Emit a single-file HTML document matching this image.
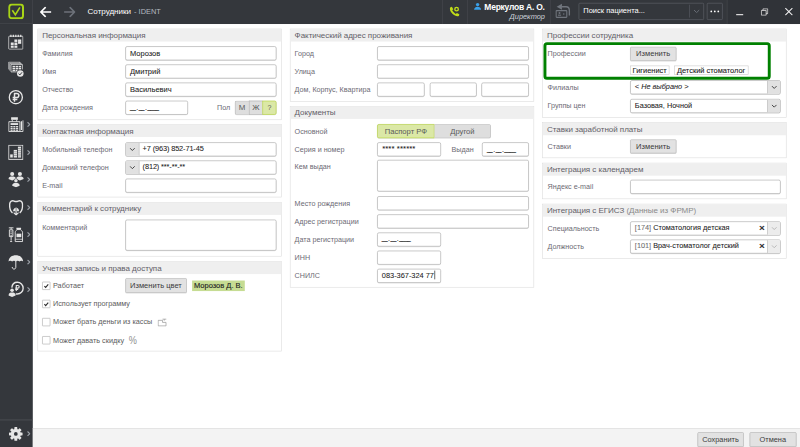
<!DOCTYPE html>
<html lang="ru">
<head>
<meta charset="utf-8">
<title>Сотрудники - IDENT</title>
<style>
html,body{margin:0;padding:0;background:#fff;}
body{width:800px;height:447px;overflow:hidden;position:relative;font-family:"Liberation Sans",sans-serif;}
#app{position:absolute;left:0;top:0;width:1366px;height:766px;transform:scale(0.58565);transform-origin:0 0;background:#fff;overflow:hidden;}
#app *{box-sizing:border-box;}
.abs{position:absolute;}
#topbar{position:absolute;left:0;top:0;width:1366px;height:41px;background:#34373c;}
#sidebar{position:absolute;left:0;top:0;width:56px;height:766px;background:#34373c;}
#bottombar{position:absolute;left:56px;top:731px;width:1310px;height:35px;background:#f3f3f3;border-top:1px solid #dadada;}
.panel{position:absolute;border:1px solid #dcdcdc;background:#fff;}
.ph{position:absolute;left:0;top:0;right:0;height:21px;background:#efefef;color:#626068;font-size:13.7px;letter-spacing:-0.06px;line-height:21px;padding-left:7px;white-space:nowrap;}
.lb{position:absolute;font-size:12.25px;color:#6c6a74;white-space:nowrap;line-height:25.5px;height:24px;}
.in{position:absolute;border:1px solid #a4a4a4;border-radius:3px;background:#fff;box-shadow:0 1px 0 rgba(0,0,0,.10);font-size:12.8px;color:#222;-webkit-text-stroke:.1px #222;line-height:21px;padding-left:7.5px;white-space:nowrap;overflow:hidden;}
.btn{position:absolute;border:1px solid #b4b4b4;border-radius:2px;background:#e2e2e2;box-shadow:0 1px 0 rgba(0,0,0,.12);font-size:12.9px;color:#3c3c3c;text-align:center;white-space:nowrap;}
.cb{position:absolute;width:14px;height:14px;border:1px solid #a8a8a8;background:#fff;border-radius:1px;}
.cbl{position:absolute;font-size:12.4px;color:#5c5c5c;white-space:nowrap;line-height:16px;}
.tg{position:absolute;border-radius:3px;background:#dedede;box-shadow:0 1px 0 rgba(0,0,0,.10);}
.tgi{position:absolute;top:0;height:24px;line-height:22px;text-align:center;font-size:13.5px;color:#5a5a5a;border:1px solid #b4b4b4;background:#dedede;}
.tgi.sel{background:#dbe8a6;border:1px solid #b3d235;color:#5a5a5a;}
.tgi.first{border-radius:3px 0 0 3px;}
.tgi.last{border-radius:0 3px 3px 0;}
.dd{position:absolute;left:0;top:0;bottom:0;width:23px;background:#e1e1e1;border-right:1px solid #b9b9b9;}
.dd.r{left:auto;right:0;border-right:none;border-left:1px solid #b9b9b9;width:22px;}
.chev{position:absolute;left:6px;top:8px;}
.dm{font-size:8.8px;letter-spacing:0;color:#111;-webkit-text-stroke:.55px #111;position:relative;top:0px;}
.dm b{font-weight:normal;margin:0 1.3px;-webkit-text-stroke:.3px #111;}
.chip{position:absolute;background:#c6dc93;color:#222;font-size:12.8px;-webkit-text-stroke:.2px #222;line-height:17px;text-align:center;white-space:nowrap;}
.tag{position:absolute;height:16px;border:1px solid #c9c9c9;background:#fff;font-size:12.7px;line-height:14px;color:#222;-webkit-text-stroke:.15px #222;text-align:center;white-space:nowrap;}
.clr{position:absolute;right:25.5px;top:-0.5px;font-size:17px;color:#222;-webkit-text-stroke:.5px #222;}
.code{color:#777;}
.caret{display:inline-block;width:1px;height:15px;background:#000;vertical-align:-3px;margin-left:1px;}
</style>
</head>
<body>
<div id="app">
<div id="sidebar"><!-- 1 calendar -->
<svg class="abs" style="left:14px;top:57.5px" width="26" height="27" viewBox="0 0 26 27"><rect x="0.8" y="3.8" width="24.4" height="22.2" rx="1.2" fill="none" stroke="#e6e6e6" stroke-width="1.4"/><path d="M4.6 1.2 V5.2 M8.8 1.2 V5.2 M13 1.2 V5.2 M17.2 1.2 V5.2 M21.4 1.2 V5.2" stroke="#e6e6e6" stroke-width="2" fill="none"/><g fill="#e6e6e6"><rect x="10.6" y="9.4" width="5" height="4.2"/><rect x="16.8" y="9.4" width="5.4" height="4.2"/><rect x="4.4" y="14.6" width="5" height="4.2"/><rect x="10.6" y="14.6" width="5" height="4.2"/><rect x="16.8" y="13.6" width="5.4" height="3.2"/><rect x="4.4" y="19.8" width="5" height="3.8"/><rect x="10.6" y="19.8" width="5" height="3.8"/></g></svg>
<!-- 2 schedule check -->
<svg class="abs" style="left:14px;top:105px" width="27" height="27" viewBox="0 0 27 27"><path d="M0.8 13.5 V1 H20 V3 M2.8 15.5 V3 H22 V5 M4.8 17.8 V5 H24.2 V13.5 M4.8 17.8 H14.5" fill="none" stroke="#e6e6e6" stroke-width="1.3"/><g fill="#e6e6e6"><rect x="7.4" y="7.4" width="4.2" height="2.6"/><rect x="12.6" y="7.4" width="4.2" height="2.6"/><rect x="17.8" y="7.4" width="4.2" height="2.6"/><rect x="7.4" y="10.9" width="4.2" height="2.6"/><rect x="12.6" y="10.9" width="4.2" height="2.6"/><rect x="17.8" y="10.9" width="4.2" height="2.6"/><rect x="7.4" y="14.4" width="4.2" height="2.2"/><rect x="12.6" y="14.4" width="3" height="2.2"/></g><circle cx="20.6" cy="20.6" r="5.6" fill="#e6e6e6"/><path d="M17.7 20.7 L19.9 23 L23.6 18.5" fill="none" stroke="#34373c" stroke-width="1.7"/></svg>
<!-- 3 ruble -->
<svg class="abs" style="left:14px;top:152.5px" width="26" height="26" viewBox="0 0 26 26"><circle cx="13" cy="13" r="11.2" fill="none" stroke="#e6e6e6" stroke-width="2.3"/><path d="M10.8 20.6 V6.6 H14.6 C19.4 6.6 19.4 13.6 14.6 13.6 H7.6 M7.6 16.9 H15.6" fill="none" stroke="#e6e6e6" stroke-width="2.5"/></svg>
<!-- 4 cash register -->
<svg class="abs" style="left:14px;top:199px" width="27" height="27" viewBox="0 0 27 27"><path d="M1 25.6 V8.8 H20 V25.6 Z" fill="none" stroke="#e6e6e6" stroke-width="1.6"/><path d="M25.2 6.5 V25.6 H20" fill="none" stroke="#e6e6e6" stroke-width="1.5"/><rect x="21.6" y="8" width="2" height="15" fill="#e6e6e6"/><rect x="5" y="1.2" width="11.5" height="4.4" fill="#e6e6e6"/><path d="M7 5.5 V8.8 M14.5 5.5 V8.8" stroke="#e6e6e6" stroke-width="1.5"/><rect x="4" y="11.2" width="13" height="3.2" fill="#e6e6e6"/><g fill="#e6e6e6"><rect x="4" y="16.2" width="3.6" height="2.4"/><rect x="8.7" y="16.2" width="3.6" height="2.4"/><rect x="13.4" y="16.2" width="3.6" height="2.4"/><rect x="4" y="19.6" width="3.6" height="2.4"/><rect x="8.7" y="19.6" width="3.6" height="2.4"/><rect x="13.4" y="19.6" width="3.6" height="2.4"/><rect x="4" y="22.8" width="3.6" height="1.6"/><rect x="8.7" y="22.8" width="3.6" height="1.6"/><rect x="13.4" y="22.8" width="3.6" height="1.6"/></g></svg>
<!-- 5 chart -->
<svg class="abs" style="left:14px;top:247px" width="26" height="26" viewBox="0 0 26 26"><rect x="0.9" y="0.9" width="24.2" height="24.2" fill="none" stroke="#e6e6e6" stroke-width="1.6"/><g fill="#e6e6e6"><rect x="3.4" y="16.6" width="4.4" height="5.4"/><rect x="9.4" y="9" width="5.6" height="13"/><rect x="16.6" y="3.4" width="5.4" height="18.6"/></g><path d="M9.4 12.2 H15 M9.4 15.4 H15 M9.4 18.6 H15 M16.6 6.6 H22 M16.6 9.8 H22 M16.6 13 H22 M16.6 16.2 H22 M16.6 19.2 H22" stroke="#34373c" stroke-width="0.7"/></svg>
<!-- 6 people -->
<svg class="abs" style="left:14px;top:293px" width="27" height="27" viewBox="0 0 27 27"><g fill="#e6e6e6"><circle cx="6.8" cy="4.2" r="3.5"/><path d="M0.4 12.6 C0.4 8.6 3.4 8.2 6.8 8.2 C10.2 8.2 13.2 8.6 13.2 12.6 L6.8 15.2 Z"/><circle cx="20" cy="4.2" r="3.5"/><path d="M13.6 12.6 C13.6 8.6 16.6 8.2 20 8.2 C23.4 8.2 26.4 8.6 26.4 12.6 L20 15.2 Z"/><circle cx="13.2" cy="15.6" r="3.5" stroke="#34373c" stroke-width="1"/><path d="M6.8 24 C6.8 20 9.8 19.6 13.2 19.6 C16.6 19.6 19.6 20 19.6 24 L13.2 26.6 Z"/></g></svg>
<!-- 7 tooth -->
<svg class="abs" style="left:15px;top:341px" width="25" height="27" viewBox="0 0 25 27"><path d="M6.4 22.4 C3 20 1.2 13 1.5 7.6 C1.8 2.6 6 0.9 9 2.3 C11.5 3.5 13.5 3.5 16 2.3 C19 0.9 23.2 2.6 23.5 7.6 C23.8 13 22 20 18.6 22.4" fill="none" stroke="#e6e6e6" stroke-width="2.4"/><path d="M7.4 19.8 C7.4 15.6 9.6 13.6 12.5 13.6 C15.4 13.6 17.6 15.6 17.6 19.8 Z" fill="#e6e6e6"/><path d="M12.5 13.6 V25.5 M8.4 22 L12.5 26 L16.6 22" fill="none" stroke="#e6e6e6" stroke-width="2"/><path d="M12.5 14 V20" stroke="#34373c" stroke-width="1"/></svg>
<!-- 8 meds -->
<svg class="abs" style="left:14px;top:387px" width="26" height="27" viewBox="0 0 26 27"><path d="M1 2 H9 M5 2 V5 M2 5.5 H8 V17 H2 Z M5 17 V24 M3.2 25.5 H6.8" fill="none" stroke="#e6e6e6" stroke-width="1.6"/><path d="M3.5 9 H6.5 M3.5 12 H6.5 M3.5 15 H6.5" stroke="#e6e6e6" stroke-width="1.2"/><path d="M14 2 H22 V5 H14 Z" fill="#e6e6e6"/><path d="M12 25.5 V9.5 C12 7.5 14 7 15 5 H21 C22 7 24.5 7.5 24.5 9.5 V25.5 Z" fill="none" stroke="#e6e6e6" stroke-width="1.6"/><rect x="14.2" y="12" width="8.2" height="6" fill="#e6e6e6"/><path d="M12 21.5 H24.5" stroke="#e6e6e6" stroke-width="1.3"/></svg>
<!-- 9 umbrella -->
<svg class="abs" style="left:14px;top:435px" width="26" height="26" viewBox="0 0 26 26"><path d="M0.5 11.5 C1 4.5 6.5 1 13 1 C19.5 1 25 4.5 25.5 11.5 C24 9.8 21 9.8 19.3 11.5 C17.5 9.8 14.8 9.8 13 11.5 C11.2 9.8 8.5 9.8 6.7 11.5 C5 9.8 2 9.8 0.5 11.5 Z" fill="#e6e6e6"/><path d="M13 10 V21.5 C13 25.5 6.8 25.5 6.8 21" fill="none" stroke="#e6e6e6" stroke-width="1.7"/></svg>
<!-- 10 ruble + person -->
<svg class="abs" style="left:14px;top:480px" width="27" height="28" viewBox="0 0 27 28"><path d="M6.2 11 C6.8 5.5 10.5 2 15.5 2 C21.2 2 25.5 6.3 25.5 12 C25.5 17.7 21.2 22 15.5 22 C14.5 22 13.6 21.9 12.8 21.6" fill="none" stroke="#e6e6e6" stroke-width="2.3"/><path d="M13.8 17 V7.5 H16.5 C19.6 7.5 19.6 12 16.5 12 H12 M12 14.4 H17" fill="none" stroke="#e6e6e6" stroke-width="1.9"/><g fill="#e6e6e6"><circle cx="6.6" cy="15.8" r="3"/><path d="M0.5 24.5 C0.5 20 3.5 19.3 6.6 19.3 C9.7 19.3 12.7 20 12.7 24.5 L6.6 27 Z"/></g></svg>
<!-- separator + gear -->
<div class="abs" style="left:0;top:715.5px;width:55px;height:2px;background:#474a4f"></div>
<svg class="abs" style="left:14.5px;top:728.5px" width="24" height="24" viewBox="-12.5 -12.5 25 25"><g fill="#e6e6e6"><circle r="9"/><rect x="-2.6" y="-12.2" width="5.2" height="24.4" rx="1"/><rect x="-2.6" y="-12.2" width="5.2" height="24.4" rx="1" transform="rotate(45)"/><rect x="-2.6" y="-12.2" width="5.2" height="24.4" rx="1" transform="rotate(90)"/><rect x="-2.6" y="-12.2" width="5.2" height="24.4" rx="1" transform="rotate(135)"/></g><circle r="3.3" fill="#34373c"/></svg>
<svg class="abs" style="left:46px;top:208.0px" width="6" height="9" viewBox="0 0 6 9"><path d="M1 0.8 L4.8 4.5 L1 8.2" fill="none" stroke="#9a9fa6" stroke-width="2"/></svg>
<svg class="abs" style="left:46px;top:255.5px" width="6" height="9" viewBox="0 0 6 9"><path d="M1 0.8 L4.8 4.5 L1 8.2" fill="none" stroke="#9a9fa6" stroke-width="2"/></svg>
<svg class="abs" style="left:46px;top:302.0px" width="6" height="9" viewBox="0 0 6 9"><path d="M1 0.8 L4.8 4.5 L1 8.2" fill="none" stroke="#9a9fa6" stroke-width="2"/></svg>
<svg class="abs" style="left:46px;top:349.5px" width="6" height="9" viewBox="0 0 6 9"><path d="M1 0.8 L4.8 4.5 L1 8.2" fill="none" stroke="#9a9fa6" stroke-width="2"/></svg>
<svg class="abs" style="left:46px;top:395.5px" width="6" height="9" viewBox="0 0 6 9"><path d="M1 0.8 L4.8 4.5 L1 8.2" fill="none" stroke="#9a9fa6" stroke-width="2"/></svg>
<svg class="abs" style="left:46px;top:443.0px" width="6" height="9" viewBox="0 0 6 9"><path d="M1 0.8 L4.8 4.5 L1 8.2" fill="none" stroke="#9a9fa6" stroke-width="2"/></svg>
<svg class="abs" style="left:46px;top:489.5px" width="6" height="9" viewBox="0 0 6 9"><path d="M1 0.8 L4.8 4.5 L1 8.2" fill="none" stroke="#9a9fa6" stroke-width="2"/></svg>
<svg class="abs" style="left:46px;top:736.0px" width="6" height="9" viewBox="0 0 6 9"><path d="M1 0.8 L4.8 4.5 L1 8.2" fill="none" stroke="#9a9fa6" stroke-width="2"/></svg>
</div>
<div id="topbar"><div class="abs" style="left:0;top:40px;width:56px;height:1px;background:#484b50"></div>
<div class="abs" style="left:55px;top:0;width:1px;height:41px;background:#484b50"></div>
<svg class="abs" style="left:14px;top:6px" width="27" height="27" viewBox="0 0 27 27"><rect x="1.7" y="1.7" width="23.6" height="23.6" rx="4.5" fill="none" stroke="#a8d416" stroke-width="3.4"/><path d="M7 11.5 L12.2 19 L20 6.5" fill="none" stroke="#a8d416" stroke-width="2.8"/></svg>
<svg class="abs" style="left:68px;top:10.5px" width="20" height="19" viewBox="0 0 20 19"><path d="M10 1.2 L1.8 9.5 L10 17.8 M2.4 9.5 H19.5" fill="none" stroke="#fff" stroke-width="2.7"/></svg>
<svg class="abs" style="left:109px;top:10.5px" width="20" height="19" viewBox="0 0 20 19"><path d="M10 1.2 L18.2 9.5 L10 17.8 M17.6 9.5 H0.5" fill="none" stroke="#6d727a" stroke-width="2.7"/></svg>
<div class="abs" style="left:149.5px;top:10px;font-size:13.7px;line-height:20px;color:#fff;white-space:nowrap">Сотрудники</div>
<div class="abs" style="left:229px;top:10px;font-size:12.6px;line-height:20px;color:#b4b9c0;white-space:nowrap">- IDENT</div>
<div class="abs" style="left:755px;top:0;width:1px;height:41px;background:#484b50"></div>
<svg class="abs" style="left:766px;top:10px" width="20" height="20" viewBox="0 0 20 20"><path d="M3 2.3 C1 4.5 2.6 9.6 6.5 13.5 C10.3 17.3 15.4 18.9 17.7 16.9 L18.3 14.3 L14.2 12 L12.3 13.8 C10.2 12.8 7.2 9.8 6.2 7.7 L8 5.8 L5.6 1.7 Z" fill="#c0dc18"/><circle cx="13.6" cy="5.6" r="3" fill="none" stroke="#c0dc18" stroke-width="2.4"/></svg>
<div class="abs" style="left:798px;top:0;width:1px;height:41px;background:#484b50"></div>
<svg class="abs" style="left:809px;top:3.5px" width="13" height="13.5" viewBox="0 0 13 13"><circle cx="6.5" cy="3.6" r="2.9" fill="#3aa0e8"/><path d="M0.5 12.5 C0.5 8.5 3.5 7.2 6.5 7.2 C9.5 7.2 12.5 8.5 12.5 12.5 Z" fill="#3aa0e8"/></svg>
<div class="abs" style="left:827px;top:3px;font-size:14.5px;letter-spacing:-0.42px;font-weight:bold;line-height:19px;color:#fff;white-space:nowrap">Меркулов А. О.</div>
<div class="abs" style="right:435.5px;top:20px;font-size:12.6px;font-style:italic;line-height:17px;color:#cdd2db;white-space:nowrap">Директор</div>
<div class="abs" style="left:939px;top:0;width:1px;height:41px;background:#484b50"></div>
<svg class="abs" style="left:948px;top:5px" width="27" height="27" viewBox="0 0 27 27"><path d="M2.5 6.6 L11.5 1.4 V11.8 Z" fill="#70757d"/><path d="M11 6.6 H18.5 C22.3 6.6 24.2 9.2 24.2 12.8 V21.6" fill="none" stroke="#70757d" stroke-width="2.3"/><rect x="1.6" y="13.2" width="18.2" height="11.4" rx="1" fill="none" stroke="#70757d" stroke-width="1.9"/><circle cx="7.4" cy="17.2" r="1.7" fill="#70757d"/><rect x="4.8" y="20" width="5.2" height="1.8" fill="#70757d"/><circle cx="14.6" cy="18.8" r="1.3" fill="#70757d"/></svg>
<div class="abs" style="left:988px;top:4.5px;width:213.5px;height:29px;border:1.5px solid #62666d;border-radius:2px"></div>
<div class="abs" style="left:996px;top:9px;font-size:12.8px;line-height:20px;color:#fff;white-space:nowrap">Поиск пациента...</div>
<div class="abs" style="left:1177px;top:8px;width:1px;height:22px;background:#5b5f66"></div>
<svg class="abs" style="left:1184px;top:16px" width="11" height="7" viewBox="0 0 11 7"><path d="M1 1 L5.5 5.5 L10 1" fill="none" stroke="#6d727a" stroke-width="1.6"/></svg>
<div class="abs" style="left:1207px;top:4.5px;width:27px;height:29px;border:1.5px solid #62666d;border-radius:2px"></div>
<div class="abs" style="left:1213px;top:17.5px;width:3.2px;height:3.2px;background:#fff;border-radius:50%"></div>
<div class="abs" style="left:1219px;top:17.5px;width:3.2px;height:3.2px;background:#fff;border-radius:50%"></div>
<div class="abs" style="left:1225px;top:17.5px;width:3.2px;height:3.2px;background:#fff;border-radius:50%"></div>
<div class="abs" style="left:1241px;top:0;width:125px;height:41px;background:#303338;border-left:1.5px solid #4a4d53"></div>
<div class="abs" style="left:1257px;top:24px;width:12px;height:1.5px;background:#e0e0e0"></div>
<svg class="abs" style="left:1299px;top:13.5px" width="13" height="13" viewBox="0 0 13 13"><path d="M1 3.8 H9.2 V12 H1 Z M3.8 3.8 V1 H12 V9.2 H9.2" fill="none" stroke="#e4e4e4" stroke-width="1.4"/></svg>
<svg class="abs" style="left:1340px;top:13px" width="14" height="14" viewBox="0 0 14 14"><path d="M1 1 L13 13 M13 1 L1 13" fill="none" stroke="#f0f0f0" stroke-width="1.8"/></svg>
</div>
<div id="bottombar"></div>
<div class="panel" style="left:64px;top:49px;width:417px;height:155.5px"><div class="ph">Персональная информация</div></div>
<div class="lb" style="left:72px;top:79px;">Фамилия</div>
<div class="in" style="left:213.5px;top:79px;width:258.5px;height:24px;">Морозов</div>
<div class="lb" style="left:72px;top:110px;">Имя</div>
<div class="in" style="left:213.5px;top:110px;width:258.5px;height:24px;">Дмитрий</div>
<div class="lb" style="left:72px;top:141px;">Отчество</div>
<div class="in" style="left:213.5px;top:141px;width:258.5px;height:24px;">Васильевич</div>
<div class="lb" style="left:72px;top:172px;">Дата рождения</div>
<div class="in" style="left:213.5px;top:172px;width:107.5px;height:24px;"><span class="dm">__<b>.</b>__<b>.</b>____</span></div>
<div class="lb" style="left:370.5px;top:172px;">Пол</div>
<div class="tg" style="left:400.5px;top:172px;width:71.5px;height:24px"><div class="tgi first" style="left:0;width:24.5px;border-right:none">М</div><div class="tgi" style="left:24px;width:24px;border-right:none">Ж</div><div class="tgi sel last" style="left:47.5px;width:24px;font-size:12px">?</div></div>
<div class="panel" style="left:64px;top:212px;width:417px;height:125px"><div class="ph">Контактная информация</div></div>
<div class="lb" style="left:72px;top:242.5px;">Мобильный телефон</div>
<div class="in" style="left:213.5px;top:242.5px;width:258.5px;height:24px;padding-left:6px;font-size:12.6px;letter-spacing:-0.22px"><div class="dd"><svg class="chev" viewBox="0 0 10 6" width="10" height="6"><path d="M1 1 L5 5 L9 1" fill="none" stroke="#444" stroke-width="1.7"/></svg></div><span style="margin-left:23px">+7 (963) 852-71-45</span></div>
<div class="lb" style="left:72px;top:273.5px;">Домашний телефон</div>
<div class="in" style="left:213.5px;top:273.5px;width:258.5px;height:24px;padding-left:6px;font-size:12.6px;letter-spacing:-0.22px"><div class="dd"><svg class="chev" viewBox="0 0 10 6" width="10" height="6"><path d="M1 1 L5 5 L9 1" fill="none" stroke="#444" stroke-width="1.7"/></svg></div><span style="margin-left:23px">(812) ***-**-**</span></div>
<div class="lb" style="left:72px;top:304.5px;">E-mail</div>
<div class="in" style="left:213.5px;top:304.5px;width:258.5px;height:24px;"></div>
<div class="panel" style="left:64px;top:345px;width:417px;height:92.6px"><div class="ph">Комментарий к сотруднику</div></div>
<div class="lb" style="left:72px;top:376px;">Комментарий</div>
<div class="in" style="left:213.5px;top:374.5px;width:258.5px;height:53.5px;"></div>
<div class="panel" style="left:64px;top:445.5px;width:417px;height:154.5px"><div class="ph">Учетная запись и права доступа</div></div>
<div class="btn" style="left:213.5px;top:475px;width:105.5px;height:25px;line-height:23px;">Изменить цвет</div>
<div class="chip" style="left:327.5px;top:479px;width:90.5px;height:17.5px">Морозов Д. В.</div>
<div class="cb" style="left:72px;top:480.5px"><svg viewBox="0 0 12 12" width="12" height="12" style="position:absolute;left:0;top:0"><path d="M2.8 6.4 L5 8.8 L9.4 3.6" fill="none" stroke="#2a2a2a" stroke-width="1.8"/></svg></div>
<div class="cbl" style="left:90.5px;top:479.5px;">Работает</div>
<div class="cb" style="left:72px;top:511.5px"><svg viewBox="0 0 12 12" width="12" height="12" style="position:absolute;left:0;top:0"><path d="M2.8 6.4 L5 8.8 L9.4 3.6" fill="none" stroke="#2a2a2a" stroke-width="1.8"/></svg></div>
<div class="cbl" style="left:90.5px;top:510.5px;">Использует программу</div>
<div class="cb" style="left:72px;top:542.5px"></div>
<div class="cbl" style="left:90.5px;top:541.5px;">Может брать деньги из кассы</div>
<div class="cb" style="left:72px;top:573.5px"></div>
<div class="cbl" style="left:90.5px;top:572.5px;">Может давать скидку</div>
<svg class="abs" style="left:269px;top:542.5px" width="16" height="15" viewBox="0 0 16 15"><path d="M1 13.5 H14.5 V7.5 H8.5 V4 H1 Z M8.5 2 H15 M11.5 2 V4.5" fill="none" stroke="#9c9c9c" stroke-width="1.3"/></svg>
<div class="abs" style="left:219.5px;top:570.5px;font-size:18.6px;color:#909090;line-height:20px;transform:scaleX(.84);transform-origin:0 0">%</div>
<div class="panel" style="left:495px;top:49px;width:417px;height:124.5px"><div class="ph">Фактический адрес проживания</div></div>
<div class="lb" style="left:503px;top:79px;">Город</div>
<div class="in" style="left:644px;top:79px;width:259px;height:24px;"></div>
<div class="lb" style="left:503px;top:110px;">Улица</div>
<div class="in" style="left:644px;top:110px;width:259px;height:24px;"></div>
<div class="lb" style="left:503px;top:141px;">Дом, Корпус, Квартира</div>
<div class="in" style="left:644px;top:141px;width:81px;height:24px;"></div>
<div class="in" style="left:733.5px;top:141px;width:80.5px;height:24px;"></div>
<div class="in" style="left:822px;top:141px;width:81px;height:24px;"></div>
<div class="panel" style="left:495px;top:181px;width:417px;height:309.5px"><div class="ph">Документы</div></div>
<div class="lb" style="left:503px;top:211.5px;">Основной</div>
<div class="tg" style="left:644px;top:211.5px;width:194px;height:24px"><div class="tgi sel first" style="left:0;width:98px;font-size:13px">Паспорт РФ</div><div class="tgi last" style="left:98px;width:96px;font-size:13px;border-left:none">Другой</div></div>
<div class="lb" style="left:503px;top:243px;">Серия и номер</div>
<div class="in" style="left:644px;top:242.5px;width:108.5px;height:24px;"><span style="font-size:13.4px;letter-spacing:.1px;position:relative;top:-1.5px">**** ******</span></div>
<div class="lb" style="left:771px;top:243px;">Выдан</div>
<div class="in" style="left:823px;top:242.5px;width:80px;height:24px;"><span class="dm">__<b>.</b>__<b>.</b>____</span></div>
<div class="lb" style="left:503px;top:273px;">Кем выдан</div>
<div class="in" style="left:644px;top:272.5px;width:259px;height:54px;"></div>
<div class="lb" style="left:503px;top:334.5px;">Место рождения</div>
<div class="in" style="left:644px;top:334.5px;width:259px;height:24px;font-size:12.6px;padding-left:7px"></div>
<div class="lb" style="left:503px;top:365.5px;">Адрес регистрации</div>
<div class="in" style="left:644px;top:365.5px;width:259px;height:24px;font-size:12.6px;padding-left:7px"></div>
<div class="lb" style="left:503px;top:396.5px;">Дата регистрации</div>
<div class="in" style="left:644px;top:396.5px;width:108.5px;height:24px;font-size:12.6px;padding-left:7px"><span class="dm">__<b>.</b>__<b>.</b>____</span></div>
<div class="lb" style="left:503px;top:427.5px;">ИНН</div>
<div class="in" style="left:644px;top:427.5px;width:108.5px;height:24px;font-size:12.6px;padding-left:7px"></div>
<div class="lb" style="left:503px;top:458.5px;">СНИЛС</div>
<div class="in" style="left:644px;top:458.5px;width:108.5px;height:24px;font-size:12.6px;padding-left:7px">083-367-324 77<span class="caret"></span></div>
<div class="panel" style="left:926px;top:49px;width:417px;height:152px"><div class="ph">Профессии сотрудника</div></div>
<div class="abs" style="left:928px;top:72px;width:387.5px;height:63.5px;border:5px solid #008000;border-radius:6px"></div>
<div class="lb" style="left:935px;top:79px;">Профессии</div>
<div class="btn" style="left:1076px;top:79.5px;width:78.5px;height:24px;line-height:22px;">Изменить</div>
<div class="tag" style="left:1076px;top:111.5px;width:66.5px">Гигиенист</div>
<div class="tag" style="left:1150.5px;top:111.5px;width:127.5px">Детский стоматолог</div>
<div class="lb" style="left:935px;top:137.5px;">Филиалы</div>
<div class="in" style="left:1076px;top:137px;width:256.5px;height:24px;font-size:12.5px;padding-left:7px"><i>&lt; Не выбрано &gt;</i><div class="dd r" style="background:#e1e1e1"><svg class="chev" viewBox="0 0 10 6" width="10" height="6"><path d="M1 1 L5 5 L9 1" fill="none" stroke="#444" stroke-width="1.7"/></svg></div></div>
<div class="lb" style="left:935px;top:169px;">Группы цен</div>
<div class="in" style="left:1076px;top:169px;width:256.5px;height:24px;font-size:12.5px;padding-left:7px">Базовая, Ночной<div class="dd r" style="background:#e1e1e1"><svg class="chev" viewBox="0 0 10 6" width="10" height="6"><path d="M1 1 L5 5 L9 1" fill="none" stroke="#444" stroke-width="1.7"/></svg></div></div>
<div class="panel" style="left:926px;top:209px;width:417px;height:61px"><div class="ph">Ставки заработной платы</div></div>
<div class="lb" style="left:935px;top:238px;">Ставки</div>
<div class="btn" style="left:1076px;top:238px;width:78.5px;height:24px;line-height:22px;">Изменить</div>
<div class="panel" style="left:926px;top:278px;width:417px;height:61.5px"><div class="ph">Интеграция с календарем</div></div>
<div class="lb" style="left:935px;top:307px;">Яндекс e-mail</div>
<div class="in" style="left:1076px;top:307px;width:256.5px;height:24px;"></div>
<div class="panel" style="left:926px;top:348px;width:417px;height:93.5px"><div class="ph">Интеграция с ЕГИСЗ <span style="color:#8a8a8a">(Данные из ФРМР)</span></div></div>
<div class="lb" style="left:935px;top:377.5px;">Специальность</div>
<div class="in" style="left:1076px;top:377.5px;width:256.5px;height:24px;font-size:12.5px;padding-left:7px"><span class="code">[174]</span> Стоматология детская<span class="clr">×</span><div class="dd r" style="background:#ececec"><svg class="chev" viewBox="0 0 10 6" width="10" height="6"><path d="M1 1 L5 5 L9 1" fill="none" stroke="#b5b5b5" stroke-width="1.6"/></svg></div></div>
<div class="lb" style="left:935px;top:408.5px;">Должность</div>
<div class="in" style="left:1076px;top:408.5px;width:256.5px;height:24px;font-size:12.5px;padding-left:7px"><span class="code">[101]</span> Врач-стоматолог детский<span class="clr">×</span><div class="dd r" style="background:#ececec"><svg class="chev" viewBox="0 0 10 6" width="10" height="6"><path d="M1 1 L5 5 L9 1" fill="none" stroke="#b5b5b5" stroke-width="1.6"/></svg></div></div>
<div class="btn" style="left:1190.5px;top:738px;width:79.5px;height:25px;line-height:23px;font-size:12.6px">Сохранить</div>
<div class="btn" style="left:1279.5px;top:738px;width:80px;height:25px;line-height:23px;font-size:12.6px">Отмена</div>
</div>
</body>
</html>
